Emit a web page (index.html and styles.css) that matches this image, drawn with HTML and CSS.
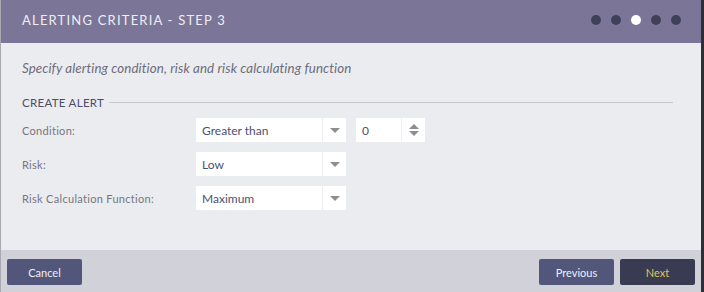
FILE: index.html
```html
<!DOCTYPE html>
<html lang="en">
<head>
  <meta charset="UTF-8">
  <title>Alerting Criteria - Step 3</title>
  <link rel="stylesheet" href="styles.css">
</head>
<body>
  <div class="wizard">
    <!-- Header -->
    <div class="wizard-header">
      <h2>Alerting Criteria - Step 3</h2>
      <div class="steps">
        <span class="dot"></span>
        <span class="dot"></span>
        <span class="dot active"></span>
        <span class="dot"></span>
        <span class="dot"></span>
      </div>
    </div>

    <!-- Body -->
    <div class="wizard-body">
      <p class="intro">Specify alerting condition, risk and risk calculating function</p>

      <div class="section-title"><span>Create Alert</span></div>

      <div class="form-row">
        <label>Condition:</label>
        <div class="select"><span>Greater than</span><i class="caret"></i></div>
        <div class="number"><span>0</span><i class="spin"></i></div>
      </div>
      <div class="form-row">
        <label>Risk:</label>
        <div class="select"><span>Low</span><i class="caret"></i></div>
      </div>
      <div class="form-row">
        <label>Risk Calculation Function:</label>
        <div class="select"><span>Maximum</span><i class="caret"></i></div>
      </div>
    </div>

    <!-- Footer -->
    <div class="wizard-footer">
      <button class="button">Cancel</button>
      <div class="nav">
        <button class="button">Previous</button>
        <button class="button next">Next</button>
      </div>
    </div>
  </div>
</body>
</html>
```

FILE: styles.css
```css
/* General Styles */
html, body {
  margin: 0;
  padding: 0;
  height: 100%;
  font-family: 'Lato', 'Open Sans', sans-serif;
  background: #ebecf0;
  overflow: hidden;
}

.wizard {
  height: 292px;
  display: flex;
  flex-direction: column;
  border-left: 1px solid #a9a9b2;
  border-right: 3px solid #2e2e36;
  box-sizing: border-box;
}

/* Header */
.wizard-header {
  height: 43px;
  background: #7b7698;
  display: flex;
  align-items: center;
  justify-content: space-between;
  padding: 0 20px 0 21px;
}

.wizard-header h2 {
  margin: 0;
  font-size: 13px;
  font-weight: 400;
  text-transform: uppercase;
  letter-spacing: 1.2px;
  color: #eeeef4;
  padding-bottom: 3px;
}

.steps {
  display: flex;
  gap: 10px;
  padding-bottom: 3px;
}

.dot {
  width: 10px;
  height: 10px;
  border-radius: 50%;
  background: #403f58;
}

.dot.active {
  background: #fff;
}

/* Body */
.wizard-body {
  flex: 1;
  padding: 0 28px 0 21px;
}

.intro {
  margin: 17px 0 0;
  font-size: 13.3px;
  font-style: italic;
  color: #6d6d7a;
  letter-spacing: 0.1px;
}

.section-title {
  display: flex;
  align-items: center;
  margin-top: 20px;
  font-size: 11.5px;
  text-transform: uppercase;
  color: #4b4d68;
  letter-spacing: 0.3px;
}

.section-title::after {
  content: "";
  flex: 1;
  height: 1px;
  background: #c7c7cf;
  margin-left: 5px;
}

.form-row {
  display: flex;
  align-items: center;
  height: 24px;
  margin-top: 10px;
}

.section-title + .form-row {
  margin-top: 9px;
}

.form-row label {
  width: 174px;
  font-size: 11px;
  color: #76767f;
  letter-spacing: 0.3px;
}

.select, .number {
  height: 24px;
  background: #fff;
  display: flex;
  align-items: center;
  font-size: 12px;
  color: #4d5070;
  box-sizing: border-box;
}

.select {
  width: 150px;
  padding-left: 6px;
}

.select span, .number span {
  flex: 1;
}

.caret {
  width: 23px;
  height: 24px;
  border-left: 1px solid #f0f0f2;
  position: relative;
}

.caret::after {
  content: "";
  position: absolute;
  left: 7px;
  top: 10px;
  border-left: 5px solid transparent;
  border-right: 5px solid transparent;
  border-top: 5px solid #8d8d92;
}

.number {
  width: 69px;
  margin-left: 10px;
  padding-left: 6px;
}

.spin {
  width: 23px;
  height: 24px;
  border-left: 1px solid #f0f0f2;
  position: relative;
}

.spin::before, .spin::after {
  content: "";
  position: absolute;
  left: 7px;
  border-left: 5px solid transparent;
  border-right: 5px solid transparent;
}

.spin::before {
  top: 6px;
  border-bottom: 5px solid #8d8d92;
}

.spin::after {
  top: 13px;
  border-top: 5px solid #8d8d92;
}

/* Footer */
.wizard-footer {
  height: 42px;
  background: #d1d1da;
  display: flex;
  align-items: flex-start;
  justify-content: space-between;
  padding: 9px 6px 0 6px;
  box-sizing: border-box;
}

.nav {
  display: flex;
  gap: 6px;
}

.button {
  width: 75px;
  height: 26px;
  border: none;
  border-radius: 2px;
  background: #52567a;
  color: #eef0f8;
  font-family: 'Lato', 'Open Sans', sans-serif;
  font-size: 11px;
  cursor: pointer;
}

.button.next {
  background: #393b52;
  color: #e2c25c;
}
```
